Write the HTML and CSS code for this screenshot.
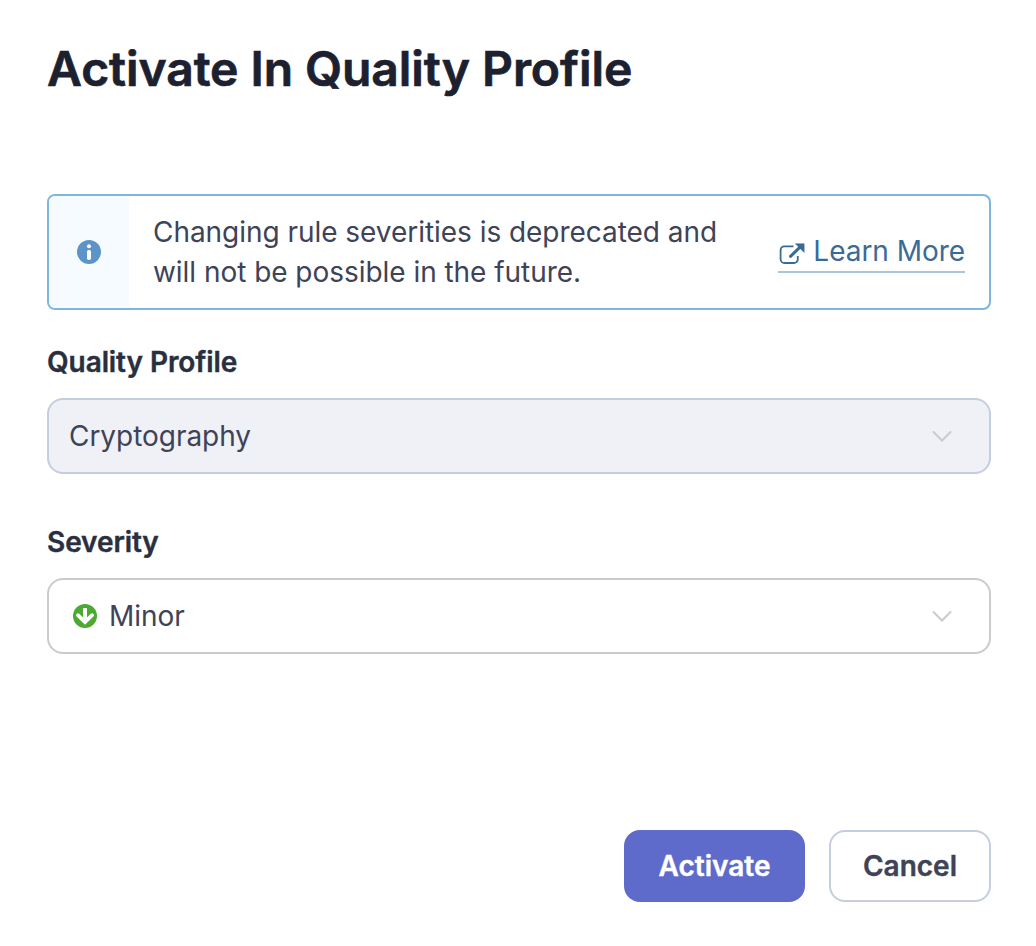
FILE: index.html
```html
<!DOCTYPE html>
<html lang="en">
<head>
<meta charset="utf-8">
<title>Activate In Quality Profile</title>
<link rel="stylesheet" href="styles.css">
</head>
<body>
<main class="modal">
  <h1 class="title">Activate In Quality Profile</h1>
  <section class="alert">
    <div class="alert-side">
      <svg class="info-icon" viewBox="0 0 24 24"><circle cx="12" cy="12" r="12" fill="#5c94ca"/><circle cx="12" cy="6.2" r="2" fill="#fff"/><rect x="10" y="10" width="4" height="10" rx="1.7" fill="#fff"/></svg>
    </div>
    <p class="alert-text">Changing rule severities is deprecated and will not be possible in the future.</p>
    <a class="link" href="#">
      <svg class="link-icon" viewBox="0 0 28 28"><path d="M15.500 8.300H6.400a3.800 3.800 0 0 0-3.800 3.800V21.200a3.800 3.800 0 0 0 3.800 3.800H16a3.800 3.800 0 0 0 3.800-3.800V18" fill="none" stroke="#3a6b96" stroke-width="1.800"/><path d="M12.500 18.300 22 9.200" fill="none" stroke="#3a6b96" stroke-width="3" stroke-linecap="round"/><path d="M17.500 5.800h8.600v8.600z" fill="#3a6b96" stroke="#3a6b96" stroke-width=".6"/></svg>
      <span>Learn More</span>
    </a>
  </section>
  <div class="field">
    <span class="label">Quality Profile</span>
    <div class="select select-disabled">
      <span>Cryptography</span>
      <svg class="chevron" viewBox="0 0 20 14"><path d="m1.500 3 8.500 8.500L18.500 3"/></svg>
    </div>
  </div>
  <div class="field">
    <span class="label">Severity</span>
    <div class="select">
      <svg class="minor-icon" viewBox="0 0 24 24"><circle cx="12" cy="12" r="12" fill="#4ca932"/><path d="M12 4v13" fill="none" stroke="#fff" stroke-width="4"/><path d="M4.900 11.200 12 18l7.100-6.800" fill="none" stroke="#fff" stroke-width="3.800" stroke-linecap="round"/></svg>
      <span>Minor</span>
      <svg class="chevron" viewBox="0 0 20 14"><path d="m1.500 3 8.500 8.500L18.500 3"/></svg>
    </div>
  </div>
  <footer class="actions">
    <button class="button button-primary">Activate</button>
    <button class="button button-secondary">Cancel</button>
  </footer>
</main>
</body>
</html>
```
FILE: styles.css
```css
* { box-sizing: border-box; }
body {
  margin: 0;
  background: #fff;
  color: #3e4357;
  font: 400 28px/40px Inter, sans-serif;
  letter-spacing: -.04px;
}
.modal {
  display: flex;
  flex-direction: column;
  height: 946px;
  padding: 37px 45px 44px 47px;
}
.title {
  margin: 0 0 93px;
  color: #1d212f;
  font-size: 48px;
  font-weight: 600;
  line-height: 64px;
  letter-spacing: -.06px;
  -webkit-text-stroke: .7px currentColor;
}
.alert {
  display: flex;
  align-items: center;
  height: 116px;
  margin-bottom: 32px;
  padding-right: 24px;
  border: 2px solid #7eb6de;
  border-radius: 8px;
  overflow: hidden;
}
.alert-side {
  display: flex;
  align-items: center;
  justify-content: center;
  align-self: stretch;
  width: 80px;
  background: #f5fbff;
}
.info-icon, .minor-icon { width: 24px; height: 24px; }
.alert-text { width: 600px; margin: 0 auto 0 24px; }
.link {
  display: flex;
  align-items: center;
  height: 42px;
  border-bottom: 2px solid #abc5dc;
  color: #3a6b96;
  text-decoration: none;
}
.link-icon { width: 28px; height: 28px; margin: 2px 7px 0 0; }
.field {
  display: flex;
  flex-direction: column;
  gap: 16px;
  margin-bottom: 48px;
}
.label {
  color: #2a2f40;
  font-weight: 600;
  letter-spacing: -.08px;
  -webkit-text-stroke: .4px currentColor;
}
.select {
  display: flex;
  align-items: center;
  height: 76px;
  padding: 0 37px 0 20px;
  border: 2px solid #cbcbcb;
  border-radius: 16px;
}
.select-disabled { background: #eff1f7; border-color: #c5cddf; }
.minor-icon { margin: 0 12px 0 4px; }
.chevron { width: 20px; height: 14px; margin-left: auto; }
.chevron path {
  fill: none;
  stroke: #cbcbcb;
  stroke-width: 2;
  stroke-linecap: round;
}
.actions {
  display: flex;
  justify-content: flex-end;
  gap: 24px;
  margin-top: auto;
}
.button {
  height: 72px;
  padding: 0;
  border: 2px solid #c5cddf;
  border-radius: 16px;
  background: #fff;
  color: #3e4357;
  font: 600 28px/40px Inter, sans-serif;
  -webkit-text-stroke: .4px currentColor;
}
.button-primary {
  width: 181px;
  border-color: #5f6bca;
  background: #5f6bca;
  color: #fff;
}
.button-secondary { width: 162px; }
```
